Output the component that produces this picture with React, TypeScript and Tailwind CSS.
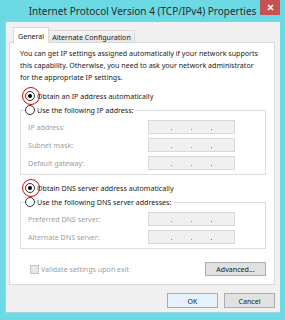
import React from 'react';

const Radio = ({ checked }: { checked?: boolean }) => (
  <span className="w-[10px] h-[10px] rounded-full border border-[#333] bg-white flex items-center justify-center shrink-0">
    {checked && <span className="w-[4px] h-[4px] rounded-full bg-black" />}
  </span>
);

// red annotation ring drawn over a radio
const Ring = () => (
  <span className="absolute left-[-3px] top-[-4px] w-[18px] h-[18px] rounded-full border-[1.5px] border-[#e00000] pointer-events-none" />
);

const IpBox = () => (
  <div className="w-[87px] h-[14px] bg-[#f0f0f0] border border-[#d9d9d9] flex items-end justify-center gap-[19px] pb-[3px]">
    <span className="w-px h-px bg-[#6a8fb8]" />
    <span className="w-px h-px bg-[#c49060]" />
    <span className="w-px h-px bg-[#777]" />
  </div>
);

const Row = ({ label }: { label: string }) => (
  <div className="h-[18px] flex items-center justify-between pl-[7px] pr-[30px]">
    <span className="text-[#a0a0a0]">{label}</span>
    <IpBox />
  </div>
);

const Group = ({ title, rows }: { title: string; rows: string[] }) => (
  <fieldset className="border border-[#dcdcdc] pt-[1px] pb-[2px]">
    <legend className="ml-[4px] h-[14px] flex items-center gap-[2px] pr-[2px]">
      <Radio />
      <span>{title}</span>
    </legend>
    {rows.map((r) => (
      <Row key={r} label={r} />
    ))}
  </fieldset>
);

export default function App() {
  return (
    <div className="w-[285px] h-[320px] bg-[#6bdae5] flex flex-col font-['Noto_Sans',sans-serif] text-[7.1px] leading-[12px] text-[#1a1a1a]">
      {/* title bar */}
      <div className="h-[22px] flex items-start shrink-0">
        <div className="w-[25px]" />
        <div className="flex-1 text-center text-[10px] leading-[22px] text-[#2b2b2b]">
          Internet Protocol Version 4 (TCP/IPv4) Properties
        </div>
        <div className="w-[20px] h-[15px] mr-[5px] bg-[#c75050] flex items-center justify-center">
          <svg width="7" height="7" viewBox="0 0 7 7">
            <path d="M1 1 L6 6 M6 1 L1 6" stroke="white" strokeWidth="1.6" />
          </svg>
        </div>
      </div>

      {/* client area */}
      <div className="mx-[5px] h-[291px] bg-[#f0f0f0] border-l border-b border-[#9fd6dc] flex flex-col pl-[3px] pr-[5px]">
        {/* tabs */}
        <div className="flex items-end pl-[4px] pt-[5px] relative z-10">
          <div className="h-[16px] px-[4px] bg-white border border-b-0 border-[#d9d9d9] flex items-center -mb-px">
            General
          </div>
          <div className="h-[12px] px-[3px] bg-gradient-to-b from-[#f3f3f3] to-[#e5e5e5] border border-l-0 border-b-0 border-[#d9d9d9] flex items-center">
            Alternate Configuration
          </div>
        </div>

        {/* tab panel */}
        <div className="bg-white border border-[#d9d9d9] pt-[4px] pl-[10px] pr-[8px] pb-[8px] flex flex-col">
          <p className="whitespace-nowrap">
            You can get IP settings assigned automatically if your network supports
            <br />
            this capability. Otherwise, you need to ask your network administrator
            <br />
            for the appropriate IP settings.
          </p>

          <div className="mt-[6px] h-[14px] flex items-center gap-[2px] pl-[5px]">
            <span className="relative">
              <Radio checked />
              <Ring />
            </span>
            <span>Obtain an IP address automatically</span>
          </div>

          <Group title="Use the following IP address:" rows={['IP address:', 'Subnet mask:', 'Default gateway:']} />

          <div className="mt-[6px] h-[14px] flex items-center gap-[2px] pl-[5px]">
            <span className="relative">
              <Radio checked />
              <Ring />
            </span>
            <span>Obtain DNS server address automatically</span>
          </div>

          <Group title="Use the following DNS server addresses:" rows={['Preferred DNS server:', 'Alternate DNS server:']} />

          <div className="mt-[13px] h-[14px] flex items-center justify-between pl-[10px]">
            <div className="flex items-center gap-[2px] text-[#a0a0a0]">
              <span className="w-[9px] h-[9px] border border-[#c4c4c4] bg-[#e8e8e8]" />
              <span>Validate settings upon exit</span>
            </div>
            <button className="w-[61px] h-[14px] bg-[#e1e1e1] border border-[#adadad] flex items-center justify-center">
              Advanced...
            </button>
          </div>
        </div>

        {/* dialog buttons */}
        <div className="mt-[8px] flex justify-end gap-[6px]">
          <button className="w-[51px] h-[15px] bg-[#e5f1fb] border border-[#7eb4ea] flex items-center justify-center">
            OK
          </button>
          <button className="w-[51px] h-[15px] bg-[#e1e1e1] border border-[#adadad] flex items-center justify-center">
            Cancel
          </button>
        </div>
      </div>
    </div>
  );
}
